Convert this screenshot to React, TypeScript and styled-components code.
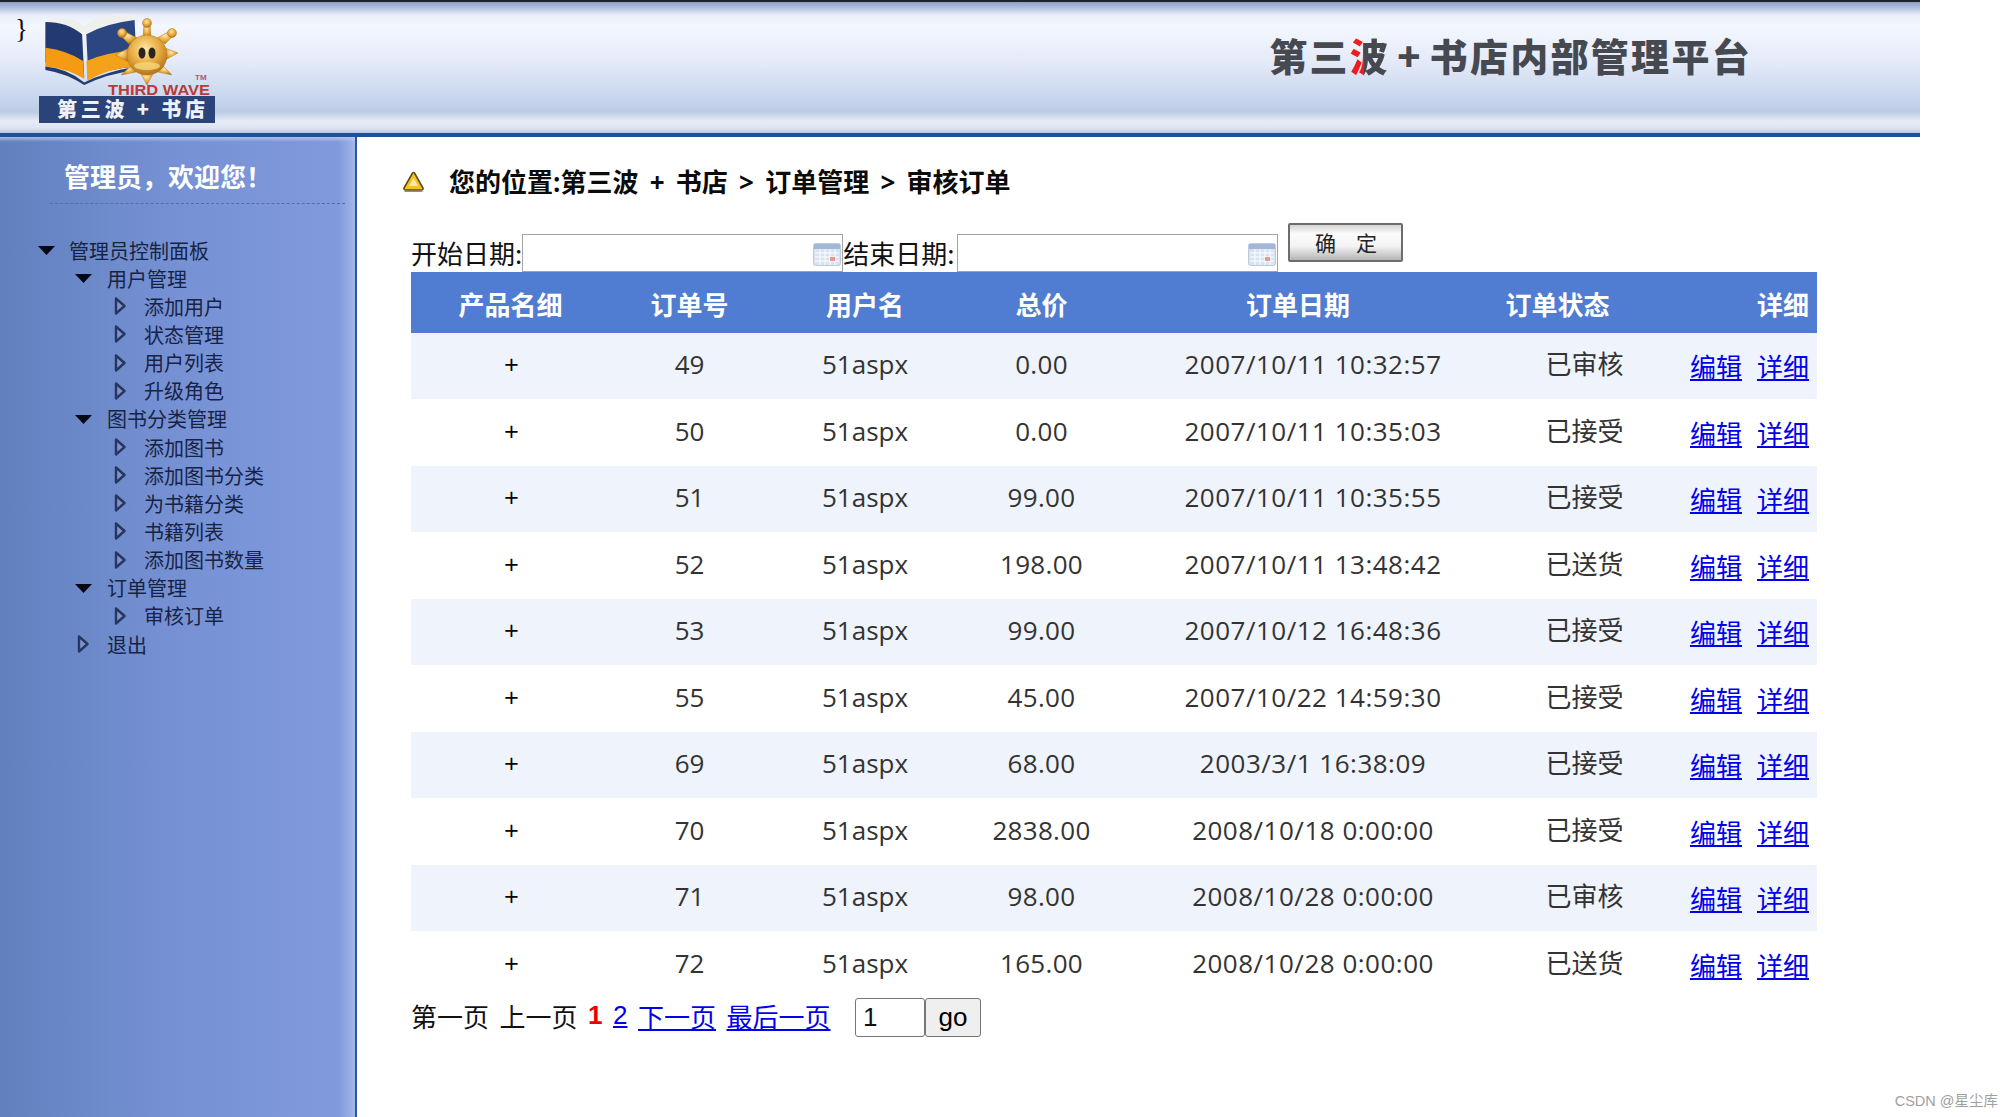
import React from "react";
import styled, { createGlobalStyle } from "styled-components";

const CJK = '"Noto Sans CJK SC", sans-serif';
const BODY = `"Open Sans", ${CJK}`;

const Global = createGlobalStyle`
  html, body { margin: 0; padding: 0; background: #fff; }
  body { font-family: ${BODY}; overflow: hidden; }
  * { box-sizing: border-box; }
`;

const Page = styled.div`
  position: relative;
  width: 2013px;
  height: 1117px;
  overflow: hidden;
`;
const Header = styled.header`
  width: 1920px;
  height: 137px;
  display: flex;
  align-items: flex-start;
  padding: 0 168px 0 15px;
  border-top: 2px solid #20232c;
  border-bottom: 4px solid #1f5199;
  background: linear-gradient(
    180deg,
    #8d9fc4 0,
    #b4c2de 6px,
    #e9eefa 13px,
    #f4f7fe 24px,
    #e4eaf8 60px,
    #c7d5ec 98px,
    #bccbe6 110px,
    #e6ecf7 119px,
    #dde4f2 126px,
    #b9c6df 131px
  );
`;
const Brace = styled.span`
  font-family: "Liberation Serif", serif;
  font-size: 27px;
  line-height: 31px;
  margin-top: 12px;
  color: #111;
`;
const LogoBox = styled.svg`
  display: block;
  margin: 4px 0 0 9px;
  flex: none;
`;
const SiteTitle = styled.h1`
  margin: 30px 0 0 auto;
  font-family: ${CJK};
  font-size: 38px;
  line-height: 46px;
  font-weight: 900;
  letter-spacing: 2.3px;
  word-spacing: -4px;
  color: #46494f;
  white-space: nowrap;
`;
const RedPart = styled.span`
  background: linear-gradient(90deg, #ee1c1c 34%, #46494f 35%);
  -webkit-background-clip: text;
  background-clip: text;
  color: transparent;
`;
const Body = styled.div`
  display: flex;
  height: 980px;
`;
const Sidebar = styled.aside`
  flex: none;
  width: 357px;
  border-right: 2px solid #2f51ab;
  background:
    linear-gradient(90deg, rgba(255, 255, 255, 0) 338px, rgba(190, 205, 240, 0.5) 353px),
    linear-gradient(180deg, rgba(200, 212, 240, 0.7) 0, rgba(200, 212, 240, 0) 5px),
    linear-gradient(90deg, #6180bd 0, #7591d4 170px, #7f99dc 330px);
`;
const Welcome = styled.div`
  height: 67px;
  margin: 0 10px 0 50px;
  padding: 21px 0 0 14px;
  border-bottom: 1px dashed #566ea8;
  font-family: ${CJK};
  font-size: 26px;
  line-height: 36px;
  font-weight: 700;
  color: #fff;
  white-space: nowrap;
`;
const Tree = styled.ul`
  list-style: none;
  margin: 32px 0 0;
  padding: 0;
`;
const TreeRow = styled.li<{ $level: number }>`
  display: flex;
  align-items: center;
  height: 28.15px;
  padding-left: ${(p) => 38 + p.$level * 37}px;
  font-family: ${CJK};
  font-size: 20px;
  color: #182344;
  white-space: nowrap;
`;
const Toggle = styled.svg<{ $wide?: boolean }>`
  display: block;
  flex: none;
  width: ${(p) => (p.$wide ? 31 : 32)}px;
  height: 18px;
`;
const Main = styled.main`
  flex: 1;
  padding: 25px 0 0 54px;
`;
const Crumb = styled.div`
  display: flex;
  align-items: center;
  gap: 24px;
  height: 38px;
  margin-left: -10px;
  font-size: 26px;
  word-spacing: 4.5px;
  font-weight: 700;
  color: #0b0b0b;
  white-space: nowrap;
`;
const FilterRow = styled.form`
  display: flex;
  align-items: flex-end;
  width: 1406px;
  height: 49px;
  margin: 23px 0 0;
`;
const FilterLabel = styled.label<{ $after?: boolean }>`
  flex: none;
  height: 38px;
  padding-right: ${(p) => (p.$after ? 3 : 0)}px;
  font-family: ${CJK};
  font-size: 26px;
  line-height: 38px;
  color: #111;
  white-space: nowrap;
`;
const DateBox = styled.div`
  position: relative;
  flex: none;
  width: 321px;
  height: 38px;
`;
const DateInput = styled.input`
  display: block;
  width: 100%;
  height: 100%;
  border: 1px solid #a3a3a3;
  background: #fff;
  outline: none;
`;
const CalendarIcon = styled.svg`
  position: absolute;
  right: 2px;
  top: 9px;
`;
const Confirm = styled.button`
  align-self: flex-start;
  width: 115px;
  height: 39px;
  margin-left: 10px;
  padding: 0;
  border: 2px solid #6d6d6d;
  border-radius: 2px;
  background: linear-gradient(180deg, #d5d5d5 0, #fbfbfb 25%, #f4f4f4 60%, #b5b5b5 100%);
  font-family: ${CJK};
  font-size: 21px;
  letter-spacing: 20px;
  text-indent: 20px;
  line-height: 33px;
  color: #222;
`;
const Table = styled.div`
  width: 1406px;
`;
const Grid = styled.div<{ $stripe?: boolean; $head?: boolean }>`
  display: grid;
  grid-template-columns: 199px 159px 192px 161px 382px 161px 152px;
  align-items: center;
  height: ${(p) => (p.$head ? "60.5px" : "66.5px")};
  background: ${(p) => (p.$head ? "#507cd1" : p.$stripe ? "#eff3fb" : "#fff")};
  font-size: 26px;
  line-height: 36px;
  color: ${(p) => (p.$head ? "#fff" : "#333")};
  font-weight: ${(p) => (p.$head ? 700 : 400)};
`;
const HeadCell = styled.div<{ $shift?: number; $right?: boolean }>`
  text-align: ${(p) => (p.$right ? "right" : "center")};
  padding-top: 3px;
  padding-right: ${(p) => (p.$right ? 8 : p.$shift ?? 0)}px;
  font-family: ${CJK};
  white-space: nowrap;
`;
const Cell = styled.div<{ $ink?: boolean; $track?: number }>`
  text-align: center;
  white-space: nowrap;
  padding-bottom: 3px;
  padding-left: ${(p) => (p.$ink ? 2 : 0)}px;
  letter-spacing: ${(p) => p.$track ?? 0}px;
  color: ${(p) => (p.$ink ? "#000" : "inherit")};
`;
const Actions = styled.div`
  display: flex;
  justify-content: flex-end;
  gap: 15px;
  padding: 3px 8px 0 0;
`;
const Link = styled.a`
  color: #0000ee;
  text-decoration: underline;
  cursor: pointer;
  white-space: nowrap;
`;
const Pager = styled.div`
  display: flex;
  align-items: center;
  gap: 10.5px;
  height: 39px;
  font-family: ${CJK};
  font-size: 26px;
  color: #111;
  white-space: nowrap;
`;
const PagerText = styled.span`
  padding-bottom: 4px;
`;
const CurrentPage = styled.b`
  padding-bottom: 4px;
  font-family: "Liberation Sans", sans-serif;
  color: #ee0000;
`;
const PageLink = styled(Link)`
  padding-bottom: 4px;
  font-family: "Liberation Sans", ${CJK};
`;
const GoGroup = styled.div`
  display: flex;
  margin-left: 14px;
`;
const GoInput = styled.input`
  width: 70px;
  height: 39px;
  padding: 0 7px;
  border: 1px solid #767676;
  border-radius: 3px;
  font-family: "Liberation Sans", sans-serif;
  font-size: 26px;
  color: #111;
  outline: none;
`;
const GoButton = styled.button`
  width: 56px;
  height: 39px;
  padding: 0;
  border: 1px solid #767676;
  border-radius: 3px;
  background: #efefef;
  font-family: "Liberation Sans", sans-serif;
  font-size: 26px;
  color: #000;
`;
const Watermark = styled.div`
  position: absolute;
  right: 15px;
  bottom: 7px;
  font-family: "Liberation Sans", ${CJK};
  font-size: 14.5px;
  line-height: 18px;
  color: #a0a0a0;
  white-space: nowrap;
`;

const Logo = () => (
  <LogoBox width="180" height="118" viewBox="0 0 180 118">
    <defs>
      <radialGradient id="sun" cx="45%" cy="35%" r="70%">
        <stop offset="0" stopColor="#fde9a6" />
        <stop offset="0.55" stopColor="#e6a83a" />
        <stop offset="1" stopColor="#a86c18" />
      </radialGradient>
    </defs>
    <g transform="translate(1 7) scale(1.05 0.89)">
      <path d="M8 9 Q30 0 44 15 Q62 -2 92 2 L92 10 L44 22 L8 12Z" fill="#eef0ee" />
      <path d="M7 10 Q28 10 42 24 L44 72 Q28 58 7 56Z" fill="#233a70" />
      <path d="M46 24 Q64 12 92 8 L94 60 Q66 62 48 74Z" fill="#2b4680" />
      <path d="M7 39 Q28 42 43 54 L44 74 Q28 62 7 60Z" fill="#f59a12" />
      <path d="M46 54 Q64 44 92 42 L94 60 Q66 62 47 76Z" fill="#f3a21a" />
      <path d="M7 60 Q28 62 44 78 Q64 66 94 60 L94 64 Q66 68 44 81 Q28 68 7 64Z" fill="#263c70" />
    </g>
    <g fill="url(#sun)" stroke="#b27c22" strokeWidth="0.5">
      <path d="M106 32 L107 17 H113 L114 32Z" />
      <path d="M92 38 L83 29 L87 25 L100 32Z" />
      <path d="M128 38 L137 29 L133 25 L120 32Z" />
      <path d="M128 42 L141 47 L128 54Z" />
      <path d="M92 42 L78 49 L92 56Z" />
      <path d="M103 66 L110 79 L117 66Z" />
      <path d="M94 60 L84 69 L99 66Z" />
      <path d="M126 60 L135 69 L121 66Z" />
      <circle cx="110" cy="17" r="4.5" />
      <circle cx="85" cy="27" r="4.5" />
      <circle cx="135" cy="27" r="4.5" />
      <circle cx="110" cy="49" r="20" />
    </g>
    <ellipse cx="110" cy="60" rx="13" ry="4" fill="#f7d77e" opacity="0.8" />
    <ellipse cx="105" cy="47" rx="3.5" ry="5.5" fill="#2a2320" />
    <ellipse cx="115" cy="47" rx="3.5" ry="5.5" fill="#2a2320" />
    <text x="158" y="74" fontFamily="'Liberation Sans', sans-serif" fontSize="8" fontWeight="700" fill="#b0557c">TM</text>
    <text x="71" y="89" fontFamily="'Liberation Sans', sans-serif" fontSize="14" fontWeight="700" fill="#b83a3a" textLength="102" lengthAdjust="spacingAndGlyphs">THIRD WAVE</text>
    <rect x="2" y="90" width="176" height="27" fill="#2a4379" />
    <text x="20" y="111" fontFamily={CJK} fontSize="20" fontWeight="900" fill="#eef1f6" textLength="148">第三波 + 书店</text>
  </LogoBox>
);

const Open = ({ wide }: { wide?: boolean }) => (
  <Toggle $wide={wide} viewBox={wide ? "0 0 31 18" : "0 0 32 18"}>
    <path d="M0 5 H17 L8.5 14Z" fill="#050814" />
  </Toggle>
);
const Closed = () => (
  <Toggle viewBox="0 0 32 18">
    <path d="M4 1.5 L12.5 9 L4 16.5Z" fill="#7d94cf" stroke="#27365f" strokeWidth="2.4" strokeLinejoin="round" />
  </Toggle>
);

const Calendar = () => (
  <CalendarIcon width="28" height="23" viewBox="0 0 28 23">
    <rect x="0.5" y="0.5" width="27" height="22" rx="2" fill="#d7e2f2" stroke="#bccadf" />
    <rect x="1" y="1" width="26" height="5" fill="#a3b8d8" />
    <path d="M2 10 H26 M2 14 H26 M2 18 H26 M7 6 V22 M12 6 V22 M17 6 V22 M22 6 V22" stroke="#fff" strokeWidth="1" />
    <rect x="17" y="14" width="5" height="4" fill="#e69a8c" />
  </CalendarIcon>
);

const Warn = () => (
  <svg width="24" height="23" viewBox="0 0 24 23" style={{ display: "block", flex: "none" }}>
    <path d="M4 21 L20 21 L23 22 L3 22Z" fill="#8d8d8d" />
    <path d="M11.5 3 Q12.5 2 13.5 3 L22 18 Q22.5 20 20 20 L5 20 Q2.5 20 3 18Z" fill="#f7c21f" stroke="#5b4a18" strokeWidth="1.6" />
    <path d="M12.5 8 L17 16 H8Z" fill="#fbe9a8" />
  </svg>
);

const tree: { level: number; label: string; open?: boolean }[] = [
  { level: 0, label: "管理员控制面板", open: true },
  { level: 1, label: "用户管理", open: true },
  { level: 2, label: "添加用户" },
  { level: 2, label: "状态管理" },
  { level: 2, label: "用户列表" },
  { level: 2, label: "升级角色" },
  { level: 1, label: "图书分类管理", open: true },
  { level: 2, label: "添加图书" },
  { level: 2, label: "添加图书分类" },
  { level: 2, label: "为书籍分类" },
  { level: 2, label: "书籍列表" },
  { level: 2, label: "添加图书数量" },
  { level: 1, label: "订单管理", open: true },
  { level: 2, label: "审核订单" },
  { level: 1, label: "退出" },
];

const orders = [
  ["49", "0.00", "2007/10/11 10:32:57", "已审核"],
  ["50", "0.00", "2007/10/11 10:35:03", "已接受"],
  ["51", "99.00", "2007/10/11 10:35:55", "已接受"],
  ["52", "198.00", "2007/10/11 13:48:42", "已送货"],
  ["53", "99.00", "2007/10/12 16:48:36", "已接受"],
  ["55", "45.00", "2007/10/22 14:59:30", "已接受"],
  ["69", "68.00", "2003/3/1 16:38:09", "已接受"],
  ["70", "2838.00", "2008/10/18 0:00:00", "已接受"],
  ["71", "98.00", "2008/10/28 0:00:00", "已审核"],
  ["72", "165.00", "2008/10/28 0:00:00", "已送货"],
];

export default function App() {
  return (
    <Page>
      <Global />
      <Header>
        <Brace>{"}"}</Brace>
        <Logo />
        <SiteTitle>
          第三<RedPart>波</RedPart> + 书店内部管理平台
        </SiteTitle>
      </Header>
      <Body>
        <Sidebar>
          <Welcome>管理员，欢迎您！</Welcome>
          <Tree>
            {tree.map((n) => (
              <TreeRow key={n.label} $level={n.level}>
                {n.open ? <Open wide={n.level === 0} /> : <Closed />}
                {n.label}
              </TreeRow>
            ))}
          </Tree>
        </Sidebar>
        <Main>
          <Crumb>
            <Warn />
            <span>您的位置:第三波 + 书店 &gt; 订单管理 &gt; 审核订单</span>
          </Crumb>
          <FilterRow>
            <FilterLabel>开始日期:</FilterLabel>
            <DateBox>
              <DateInput />
              <Calendar />
            </DateBox>
            <FilterLabel $after>结束日期:</FilterLabel>
            <DateBox>
              <DateInput />
              <Calendar />
            </DateBox>
            <Confirm type="button">确定</Confirm>
          </FilterRow>
          <Table>
            <Grid $head>
              <HeadCell>产品名细</HeadCell>
              <HeadCell>订单号</HeadCell>
              <HeadCell>用户名</HeadCell>
              <HeadCell>总价</HeadCell>
              <HeadCell $shift={30}>订单日期</HeadCell>
              <HeadCell $shift={54}>订单状态</HeadCell>
              <HeadCell $right>详细</HeadCell>
            </Grid>
            {orders.map(([id, total, date, state], i) => (
              <Grid key={id} $stripe={i % 2 === 0}>
                <Cell $ink>+</Cell>
                <Cell>{id}</Cell>
                <Cell>51aspx</Cell>
                <Cell $track={0.3}>{total}</Cell>
                <Cell $track={0.5}>{date}</Cell>
                <Cell>{state}</Cell>
                <Actions>
                  <Link>编辑</Link>
                  <Link>详细</Link>
                </Actions>
              </Grid>
            ))}
          </Table>
          <Pager>
            <PagerText>第一页</PagerText>
            <PagerText>上一页</PagerText>
            <CurrentPage>1</CurrentPage>
            <PageLink>2</PageLink>
            <PageLink>下一页</PageLink>
            <PageLink>最后一页</PageLink>
            <GoGroup>
              <GoInput defaultValue="1" />
              <GoButton type="button">go</GoButton>
            </GoGroup>
          </Pager>
        </Main>
      </Body>
      <Watermark>CSDN @星尘库</Watermark>
    </Page>
  );
}
